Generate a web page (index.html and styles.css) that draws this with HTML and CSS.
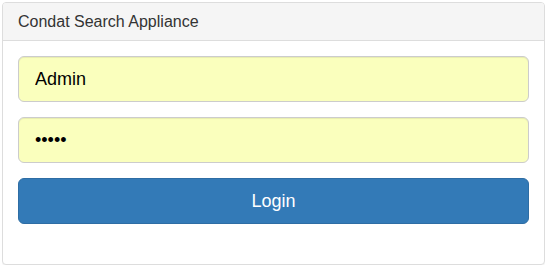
FILE: index.html
```html
<!DOCTYPE html>
<html lang="en">
<head>
  <meta charset="UTF-8">
  <title>Condat Search Appliance</title>
  <link rel="stylesheet" href="styles.css">
</head>
<body>

<div class="panel">
  <div class="panel-heading">Condat Search Appliance</div>
  <div class="panel-body">
    <form class="login-form" onsubmit="return false">
      <input type="text" class="field" value="Admin">
      <input type="password" class="field" value="admin">
      <button type="submit" class="btn-login">Login</button>
    </form>
  </div>
</div>

</body>
</html>
```
FILE: styles.css
```css
* {
  box-sizing: border-box;
}

body {
  margin: 2px;
  font-family: "Liberation Sans", Arial, sans-serif;
  font-size: 14px;
  color: #333;
  background: #fff;
}

.panel {
  width: 543px;
  height: 263px;
  border: 1px solid #ddd;
  border-radius: 4px;
  box-shadow: 0 1px 1px rgba(0,0,0,0.05);
  background: #fff;
}

.panel-heading {
  height: 38px;
  padding: 0 15px;
  display: flex;
  align-items: center;
  font-size: 16px;
  color: #333;
  background: #f5f5f5;
  border-bottom: 1px solid #ddd;
  border-radius: 3px 3px 0 0;
}

.panel-body {
  padding: 15px;
}

.login-form {
  display: flex;
  flex-direction: column;
  gap: 15px;
  margin: 0;
}

.field {
  height: 46px;
  padding: 10px 16px;
  font-family: inherit;
  font-size: 18px;
  color: #000;
  background: #faffbd;
  border: 1px solid #ccc;
  border-radius: 6px;
  box-shadow: inset 0 1px 1px rgba(0,0,0,0.075);
  outline: none;
}

.btn-login {
  height: 46px;
  font-family: inherit;
  font-size: 18px;
  color: #fff;
  background: #337ab7;
  border: 1px solid #2e6da4;
  border-radius: 6px;
  cursor: pointer;
}
```
